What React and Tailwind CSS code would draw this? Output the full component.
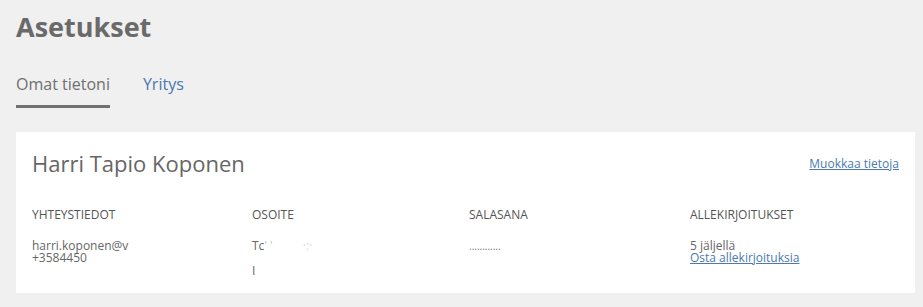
const columns = [
  {
    title: "Yhteystiedot",
    lines: ["harri.koponen@v", "+3584450"],
  },
  {
    title: "Osoite",
    address: true,
  },
  {
    title: "Salasana",
    lines: ["............"],
  },
  {
    title: "Allekirjoitukset",
    lines: ["5 jäljellä"],
    link: "Osta allekirjoituksia",
  },
];

export default function App() {
  return (
    <div className="min-h-[307px] bg-[#f0f0f0] pl-4 pr-2 pt-[9px] font-['Open_Sans',sans-serif] text-[#666]">
      <h1 className="text-[27px] font-bold leading-[36px] text-[#6a6a6a]">Asetukset</h1>

      <nav className="mt-[27px] flex gap-[33px] text-base">
        <a className="border-b-[3px] border-[#707070] pb-[9px] leading-6 text-[#6f6f6f]">Omat tietoni</a>
        <a className="leading-6 text-[#4a78b4]">Yritys</a>
      </nav>

      <section className="mt-6 bg-white px-4 pb-[16px] pt-[16px]">
        <div className="flex items-start justify-between">
          <p className="text-[22px] leading-[30px] text-[#666]">Harri Tapio Koponen</p>
          <a className="mt-[8px] text-xs text-[#4a7bb0] underline">Muokkaa tietoja</a>
        </div>

        <div className="mt-[29px] grid grid-cols-[220px_217px_221px_1fr] text-xs">
          {columns.map((col) => (
            <div key={col.title}>
              <p className="uppercase leading-4 text-[#555]">{col.title}</p>
              <div className="mt-[17px] leading-[12px] text-[#666]">
                {col.address ? (
                  <>
                    <p>
                      Tc<span className="text-[#c8c8c8]">' '</span>
                      <span className="ml-[30px] text-[#d8d8d8]">·:·</span>
                    </p>
                    <p className="mt-[13px]">I</p>
                  </>
                ) : (
                  col.lines.map((line) => (
                    <p key={line} className={col.title === "Salasana" ? "text-[10px] text-[#777]" : ""}>
                      {line}
                    </p>
                  ))
                )}
                {col.link ? (
                  <a className="block text-[#4a7bb0] underline">{col.link}</a>
                ) : null}
              </div>
            </div>
          ))}
        </div>
      </section>
    </div>
  );
}
